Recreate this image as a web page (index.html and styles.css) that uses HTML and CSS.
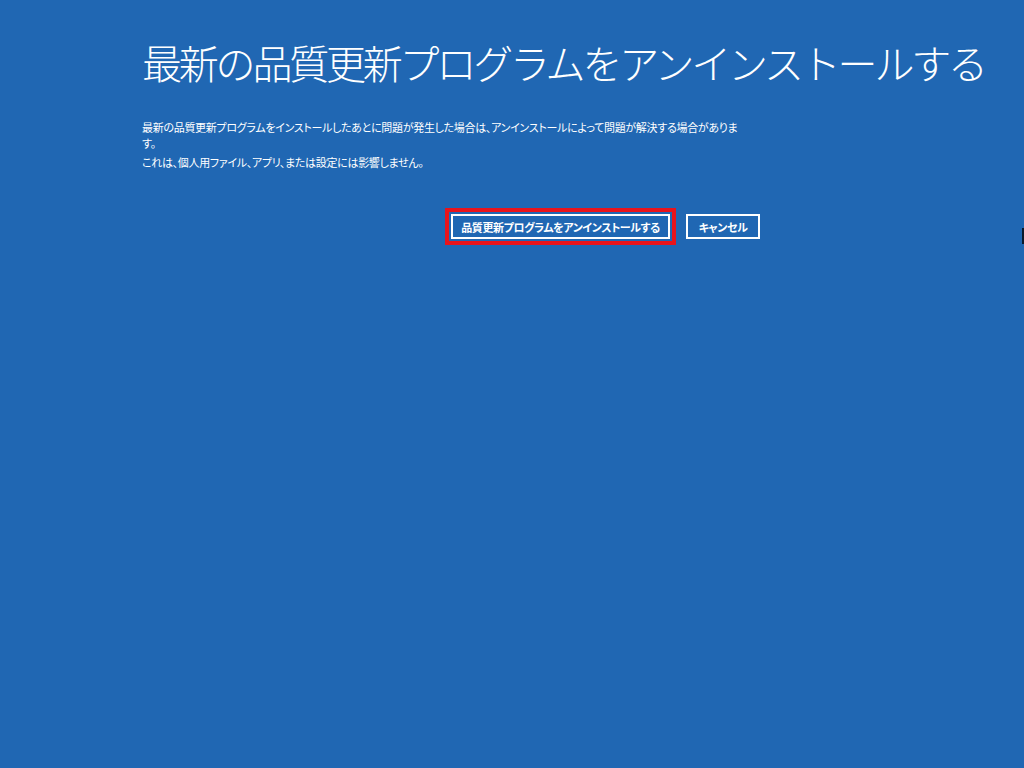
FILE: index.html
```html
<!DOCTYPE html>
<html lang="ja">
<head>
    <meta charset="UTF-8">
    <meta name="viewport" content="width=device-width, initial-scale=1.0">
    <title>最新の品質更新プログラムをアンインストールする</title>
    <link rel="stylesheet" href="styles.css">
</head>
<body>
    <main class="page">
        <h1 class="title">最新の品質更新プログラムをアンインストールする</h1>

        <div class="message">
            <p>最新の品質更新プログラムをインストールしたあとに問題が発生した場合は、アンインストールによって問題が解決する場合があります。</p>
            <p>これは、個人用ファイル、アプリ、または設定には影響しません。</p>
        </div>

        <div class="actions">
            <button class="btn btn-primary">品質更新プログラムをアンインストールする</button>
            <button class="btn btn-cancel">キャンセル</button>
        </div>
    </main>
    <div class="edge-mark"></div>
</body>
</html>
```

FILE: styles.css
```css
html, body {
    height: 100%;
}

body {
    margin: 0;
    background-color: #2067b3;
    color: #ffffff;
    font-family: "Noto Sans CJK JP", "Noto Sans", sans-serif;
    overflow: hidden;
    position: relative;
}

.page {
    padding: 32px 0 0 142px;
}

.title {
    margin: 0;
    font-size: 40px;
    font-weight: 300;
    line-height: 60px;
    letter-spacing: -3.2px;
    white-space: nowrap;
}

.message {
    margin-top: 27px;
    width: 602px;
    font-size: 11px;
    letter-spacing: -0.3px;
    font-feature-settings: "palt";
}

.message p {
    margin: 0 0 3px 0;
    line-height: 16px;
}

.actions {
    display: flex;
    gap: 16px;
    margin-top: 44px;
    margin-left: 309px;
}

.btn {
    height: 25px;
    padding: 0;
    background: transparent;
    border: 2px solid #ffffff;
    color: #ffffff;
    font-family: inherit;
    font-size: 11px;
    font-weight: 700;
    letter-spacing: -0.4px;
    white-space: nowrap;
    font-feature-settings: "palt";
    cursor: pointer;
}

.btn-primary {
    width: 219px;
    box-shadow: 0 0 0 2px #2067b3, 0 0 0 6px #e8141c;
}

.btn-cancel {
    width: 74px;
}

/* dark sliver on the right edge of the screen */
.edge-mark {
    position: absolute;
    right: 0;
    top: 228px;
    width: 2px;
    height: 16px;
    background: #0b1a2c;
}
```
